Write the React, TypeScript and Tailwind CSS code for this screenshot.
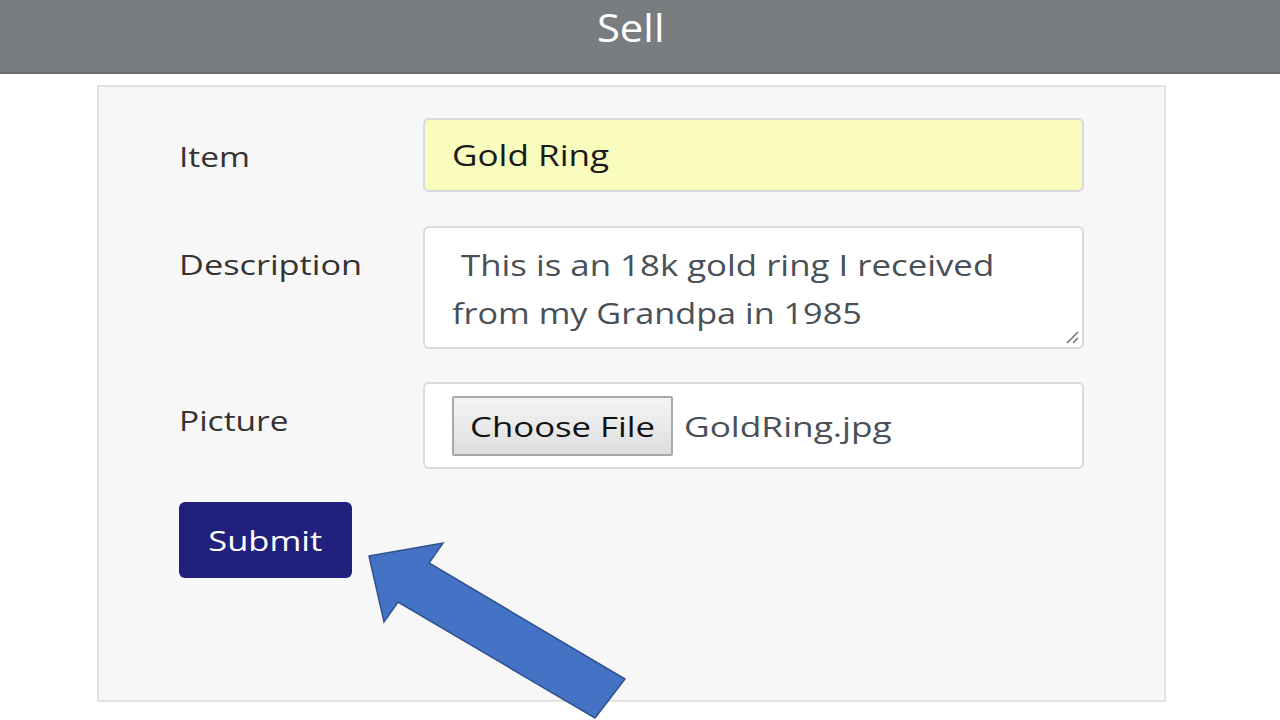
const wide = "inline-block origin-left scale-x-[1.24]";

export default function App() {
  return (
    <div
      className="relative w-[1280px] h-[720px] overflow-hidden bg-white"
      style={{ fontFamily: '"Open Sans", "Noto Sans", sans-serif' }}
    >
      <header className="h-[74px] bg-[#7a7d80] border-b-2 border-[#6c6f72] flex items-center justify-center">
        <h1 className="text-white text-[38px] leading-none -mt-[18px] mr-[18px] scale-x-[1.1]">Sell</h1>
      </header>

      <div className="ml-[97px] mt-[11px] w-[1069px] h-[617px] bg-[#f7f7f7] border-2 border-[#e2e2e2] pl-[80px] pt-[31px]">
        <div className="flex">
          <label className="w-[244px] mt-[20px] text-[27px] leading-[38px] text-[#333]">
            <span className={wide}>Item</span>
          </label>
          <div className="w-[661px] h-[74px] rounded-[6px] border-2 border-[#d6d9de] bg-[#fafcbd] flex items-center pl-[27px] text-[29px] text-[#1b1b1b]">
            <span className="inline-block origin-left scale-x-[1.21]">Gold Ring</span>
          </div>
        </div>

        <div className="flex mt-[34px]">
          <label className="w-[244px] mt-[20px] text-[27px] leading-[38px] text-[#333]">
            <span className="inline-block origin-left scale-x-[1.27]">Description</span>
          </label>
          <div className="relative w-[661px] h-[123px] rounded-[6px] border-2 border-[#d6d9de] bg-white pl-[27px] pt-[13px] text-[29px] leading-[48px] text-[#495057]">
            <div className="origin-left scale-x-[1.2] whitespace-nowrap">&nbsp;This is an 18k gold ring I received</div>
            <div className="origin-left scale-x-[1.18] whitespace-nowrap">from my Grandpa in 1985</div>
            <svg className="absolute right-[3px] bottom-[3px]" width="16" height="16" viewBox="0 0 16 16">
              <path d="M15 4 L4 15 M15 10 L10 15" stroke="#777" strokeWidth="1.6" />
            </svg>
          </div>
        </div>

        <div className="flex mt-[33px]">
          <label className="w-[244px] mt-[20px] text-[27px] leading-[38px] text-[#333]">
            <span className={wide}>Picture</span>
          </label>
          <div className="w-[661px] h-[87px] rounded-[6px] border-2 border-[#d6d9de] bg-white flex items-center pl-[27px]">
            <div className="w-[221px] h-[60px] flex items-center justify-center border-2 border-[#a9a9a9] rounded-[2px] bg-gradient-to-b from-[#f4f4f4] to-[#dedede] text-[28px] text-[#111]">
              <span className="inline-block scale-x-[1.24]">Choose File</span>
            </div>
            <span className="ml-[11px] text-[28px] text-[#495057] inline-block origin-left scale-x-[1.26]">GoldRing.jpg</span>
          </div>
        </div>

        <button className="mt-[33px] w-[173px] h-[76px] rounded-[6px] bg-[#22207d] text-white text-[28px] flex items-center justify-center">
          <span className="inline-block scale-x-[1.23]">Submit</span>
        </button>
      </div>

      <svg className="absolute left-0 top-0 pointer-events-none" width="1280" height="720" viewBox="0 0 1280 720">
        <polygon
          points="369,556 443,543 429,563 625,679 595,718 398,602 384,622"
          fill="#4472c4"
          stroke="#2f528f"
          strokeWidth="1.5"
          strokeLinejoin="miter"
        />
      </svg>
    </div>
  );
}
